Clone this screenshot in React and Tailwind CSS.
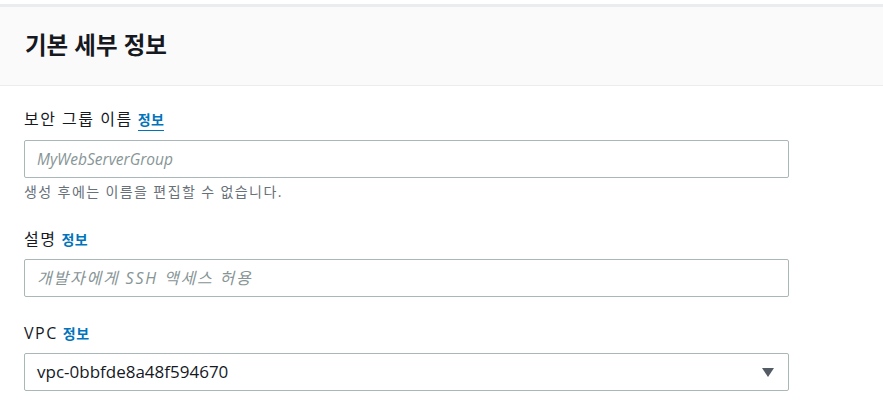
import React from "react";

const font = { fontFamily: '"Open Sans", "Noto Sans CJK KR", sans-serif' };

const InfoLink = ({ underline }) => (
  <a
    href="#"
    className={`ml-[5px] text-[14px] leading-[20px] font-bold tracking-[0.5px] text-[#0073bb] ${
      underline ? "border-b border-[#0073bb]" : ""
    }`}
  >
    정보
  </a>
);

const Field = ({ label, underline, children, hint, className = "" }) => (
  <div className={`flex flex-col ${className}`}>
    <div className="flex items-baseline text-[16px] leading-[22px] tracking-[1.5px] text-[#16191f]">
      <span>{label}</span>
      <InfoLink underline={underline} />
    </div>
    <div className="mt-[9px]">{children}</div>
    {hint && (
      <p className="mt-[6px] text-[14px] leading-[16px] tracking-[1.4px] text-[#687078]">
        {hint}
      </p>
    )}
  </div>
);

export default function App() {
  return (
    <div className="min-h-screen w-full bg-white" style={font}>
      <div className="pt-1">
        <div className="border-t-[3px] border-[#eaeded] bg-[#fafafa] border-b border-b-[#eaeded] h-[82px] flex items-center px-[25px]">
          <h2 className="text-[23.5px] font-bold text-[#16191f]">기본 세부 정보</h2>
        </div>

        <div className="px-[24px] pt-[22px] w-[789px] flex flex-col">
          <Field label="보안 그룹 이름" underline hint="생성 후에는 이름을 편집할 수 없습니다.">
            <input
              className="w-[765px] h-[38px] border border-[#aab7b8] rounded-[2px] px-[12px] text-[15.5px] italic text-[#16191f] placeholder:text-[#879596] outline-none"
              placeholder="MyWebServerGroup"
            />
          </Field>

          <Field label="설명" className="mt-[28px]">
            <input
              className="w-[765px] h-[38px] border border-[#aab7b8] rounded-[2px] px-[12px] text-[16px] italic tracking-[1.8px] text-[#16191f] placeholder:text-[#879596] outline-none"
              placeholder="개발자에게 SSH 액세스 허용"
            />
          </Field>

          <Field label="VPC" className="mt-[25px]">
            <div className="w-[765px] h-[38px] border border-[#aab7b8] rounded-[2px] pl-[12px] pr-[14px] flex items-center justify-between text-[17px] text-[#16191f]">
              <span>vpc-0bbfde8a48f594670</span>
              <svg width="12" height="9" viewBox="0 0 12 9">
                <path d="M0 0 H12 L6 9 Z" fill="#545b64" />
              </svg>
            </div>
          </Field>
        </div>
      </div>
    </div>
  );
}
